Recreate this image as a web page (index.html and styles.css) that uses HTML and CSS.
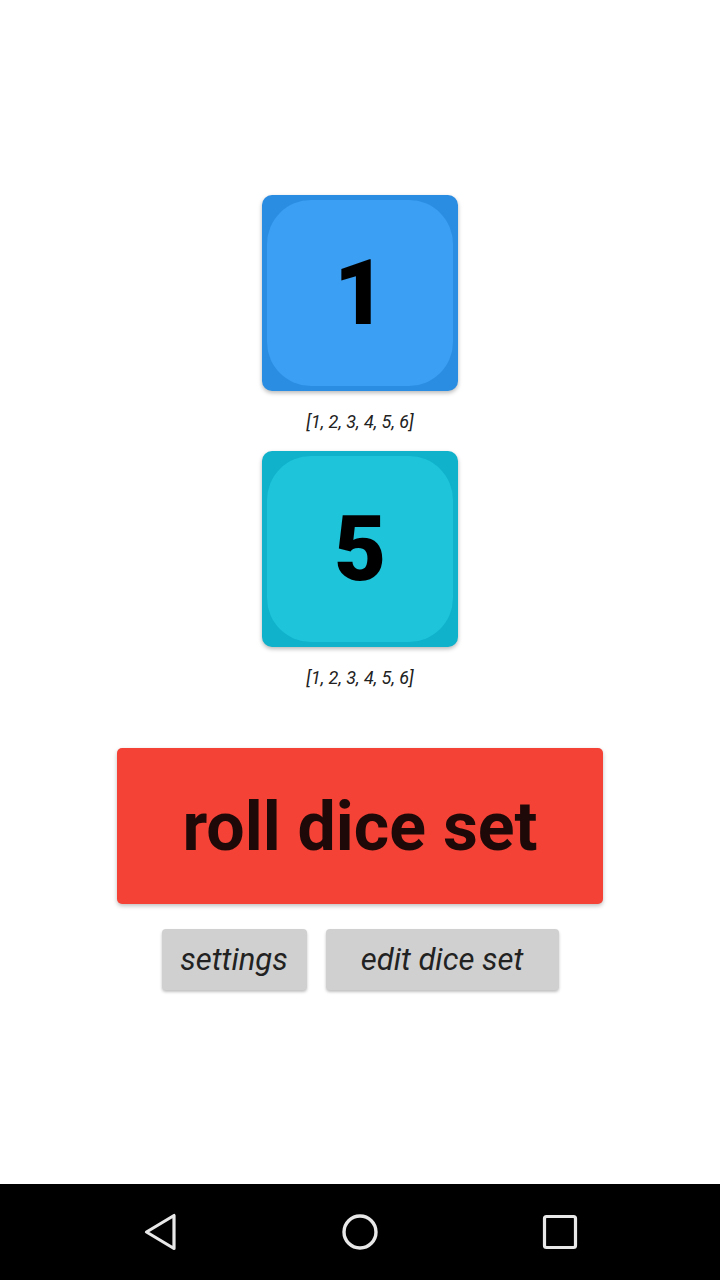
FILE: index.html
```html
<!DOCTYPE html>
<html>
    <head>
        <title>Dice Roller</title>
        <link rel="stylesheet" href="styles.css">
    </head>
<body>
    <div class="screen">
        <div class="content">
            <div class="die die-blue">
                <div class="die-face">1</div>
            </div>
            <p class="faces">[1, 2, 3, 4, 5, 6]</p>

            <div class="die die-cyan">
                <div class="die-face">5</div>
            </div>
            <p class="faces">[1, 2, 3, 4, 5, 6]</p>

            <button class="roll-button">roll dice set</button>

            <div class="button-row">
                <button class="small-button">settings</button>
                <button class="small-button">edit dice set</button>
            </div>
        </div>

        <div class="nav-bar">
            <svg class="nav-icon" width="40" height="40" viewBox="0 0 40 40">
                <path d="M34 3.5 L34 36.5 L6.5 20 Z" fill="none" stroke="#e8e8e8" stroke-width="3.2" stroke-linejoin="round"/>
            </svg>
            <svg class="nav-icon" width="40" height="40" viewBox="0 0 40 40">
                <circle cx="20" cy="20" r="16" fill="none" stroke="#e8e8e8" stroke-width="3.4"/>
            </svg>
            <svg class="nav-icon" width="40" height="40" viewBox="0 0 40 40">
                <rect x="4.5" y="4.5" width="31" height="31" rx="2" fill="none" stroke="#e8e8e8" stroke-width="3.2"/>
            </svg>
        </div>
    </div>
</body>
</html>
```

FILE: styles.css
```css
body {
    margin: 0;
    background-color: #fff;
    font-family: Roboto, "Liberation Sans", sans-serif;
}

.screen {
    width: 720px;
    height: 1280px;
    display: flex;
    flex-direction: column;
}

.content {
    flex: 1;
    display: flex;
    flex-direction: column;
    align-items: center;
    padding-top: 195px;
}

.die {
    width: 196px;
    height: 196px;
    border-radius: 10px;
    padding: 5px;
    box-sizing: border-box;
    box-shadow: 0 2px 4px rgba(0, 0, 0, 0.28);
}

.die-face {
    height: 100%;
    border-radius: 44px;
    display: flex;
    justify-content: center;
    align-items: center;
    font-size: 90px;
    font-weight: 900;
    color: #000;
}

.die-blue {
    background-color: #2b8de2;
}

.die-blue .die-face {
    background-color: #3b9ff3;
}

.die-cyan {
    background-color: #10b1ca;
}

.die-cyan .die-face {
    background-color: #1dc4da;
}

.faces {
    margin: 20px 0 18px;
    font-size: 18px;
    line-height: 22px;
    font-style: italic;
    color: #222;
}

.roll-button {
    width: 486px;
    height: 156px;
    margin-top: 41px;
    padding-top: 3px;
    border: none;
    border-radius: 5px;
    background-color: #f44336;
    box-shadow: 0 2px 4px rgba(0, 0, 0, 0.25);
    font-family: Roboto, "Liberation Sans", sans-serif;
    font-size: 68px;
    font-weight: bold;
    color: #1f0908;
}

.button-row {
    display: flex;
    gap: 19px;
    margin-top: 25px;
}

.small-button {
    height: 61px;
    padding: 0;
    border: none;
    border-radius: 4px;
    background-color: #d0d0d0;
    box-shadow: 0 2px 3px rgba(0, 0, 0, 0.25);
    font-family: Roboto, "Liberation Sans", sans-serif;
    font-size: 31px;
    font-style: italic;
    color: #222;
}

.small-button:first-child {
    width: 145px;
}

.small-button:last-child {
    width: 233px;
}

.nav-bar {
    height: 96px;
    background-color: #000;
    display: flex;
    justify-content: center;
    align-items: center;
    gap: 160px;
}
```
